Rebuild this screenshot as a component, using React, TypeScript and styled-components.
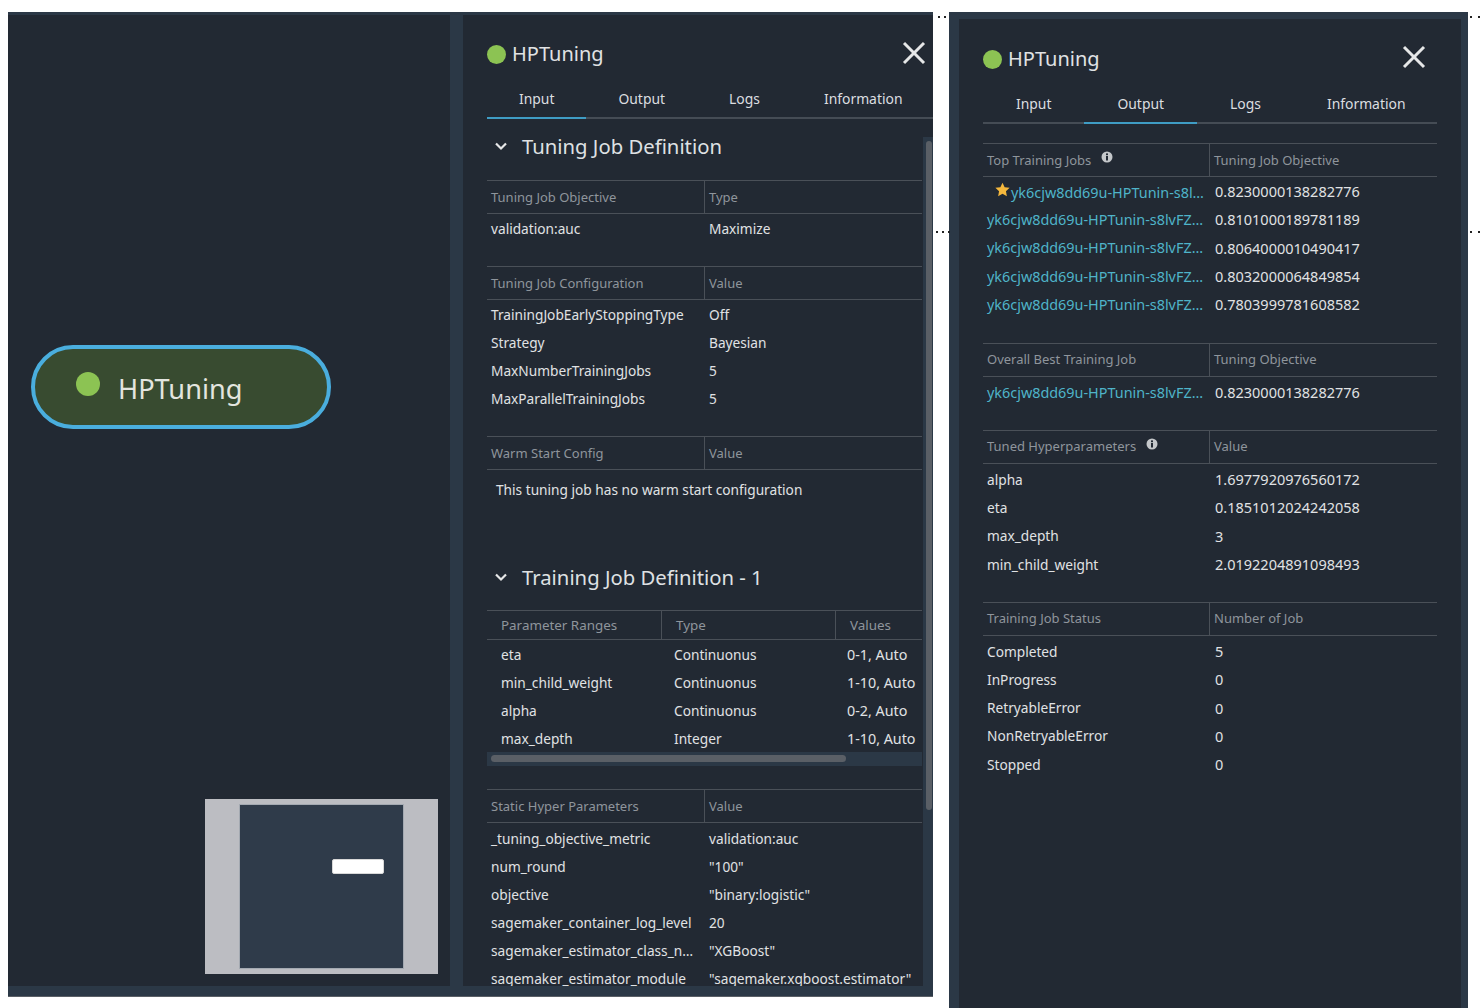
import React from 'react';
import styled, { createGlobalStyle } from 'styled-components';

const GlobalStyle = createGlobalStyle`
	html, body {
		margin: 0;
		background: #fff;
	}
	* {
		box-sizing: border-box;
	}
`;

const Page = styled.div`
	position: relative;
	width: 1482px;
	height: 1008px;
	overflow: hidden;
	display: flex;
	align-items: flex-start;
	padding: 12px 0 0 8px;
	font-family: 'Noto Sans', sans-serif;
	font-size: 13.7px;
	color: #e0e2e4;
`;

const LeftShot = styled.div`
	width: 925px;
	height: 985px;
	display: flex;
	flex-direction: column;
	background: #2b3846;
	padding: 3px 0 10px;
	border-bottom: 1px solid #5a5f66;
`;

const LeftBody = styled.div`
	flex: 1;
	min-height: 0;
	display: flex;
	gap: 13px;
`;

const Canvas = styled.div`
	position: relative;
	width: 442px;
	background: #222933;
`;

const FlowNode = styled.div`
	position: absolute;
	left: 23px;
	top: 330px;
	width: 300px;
	height: 84px;
	border: 4px solid #4aaede;
	border-radius: 42px;
	background: #384b30;
	display: flex;
	align-items: center;
	padding-left: 41px;
	gap: 18px;
	font-size: 27.2px;
	color: #e3e5df;
`;

const NodeDot = styled.span`
	width: 24px;
	height: 24px;
	margin-top: -6px;
	border-radius: 50%;
	background: #8cc353;
`;

const NodeLabel = styled.span`
	margin-top: 2px;
`;

const Minimap = styled.div`
	position: absolute;
	left: 197px;
	top: 784px;
	width: 233px;
	height: 175px;
	background: #bcbdc2;
	display: flex;
	justify-content: center;
	align-items: center;
`;

const MinimapView = styled.div`
	position: relative;
	width: 165px;
	height: 165px;
	margin-top: -1px;
	background: #2f3b4a;
	border: 1px solid #a3a9b1;
`;

const MinimapNode = styled.div`
	position: absolute;
	left: 92px;
	top: 54px;
	width: 52px;
	height: 15px;
	background: #fff;
	border: 1px solid #d8d8d8;
	border-radius: 2px;
`;

const Panel = styled.div<{ $pad: number }>`
	position: relative;
	flex: 1;
	min-width: 0;
	height: 100%;
	overflow: hidden;
	background: #222933;
	padding-left: ${(p) => p.$pad}px;
`;

const RightShot = styled.div`
	width: 519px;
	height: 996px;
	margin-left: 16px;
	background: #2b3846;
	padding: 7px 7px 0 10px;
	display: flex;
`;

const PanelHead = styled.div<{ $height: number }>`
	height: ${(p) => p.$height}px;
	padding-top: 14px;
	display: flex;
	align-items: center;
	justify-content: space-between;
`;

const PanelTitle = styled.div`
	display: flex;
	align-items: center;
	gap: 6px;
	font-size: 20px;
`;

const TitleText = styled.span`
	margin-top: -2px;
`;

const TitleDot = styled.span`
	width: 19px;
	height: 19px;
	border-radius: 50%;
	background: #8cc353;
`;

const CloseIcon = styled.svg<{ $right: number }>`
	width: 24px;
	height: 24px;
	margin-right: ${(p) => p.$right}px;
	margin-top: -4px;
	stroke: #e6e7e8;
	stroke-width: 3;
	fill: none;
`;

const TabBar = styled.div<{ $width?: number }>`
	display: flex;
	height: 39px;
	width: ${(p) => (p.$width ? `${p.$width}px` : 'auto')};
	border-bottom: 2px solid #454c55;
`;

const Tab = styled.div<{ $active?: boolean; $pad: number }>`
	padding: 0 ${(p) => p.$pad}px;
	height: 39px;
	line-height: 37px;
	font-size: 13.9px;
	color: #dcdee0;
	white-space: nowrap;
	border-bottom: 2px solid ${(p) => (p.$active ? '#3f9cc4' : 'transparent')};
`;

const SectionTitle = styled.div<{ $after: number }>`
	height: 56px;
	padding: 0 0 2px 7px;
	margin-bottom: ${(p) => p.$after}px;
	display: flex;
	align-items: center;
	gap: 14px;
	font-size: 20.3px;
	color: #dfe1e3;
`;

const TableWrap = styled.div<{ $gap?: number; $width: number }>`
	width: ${(p) => p.$width}px;
	margin-top: ${(p) => p.$gap ?? 0}px;
`;

const Head = styled.div<{ $cols: string; $height?: number }>`
	display: grid;
	grid-template-columns: ${(p) => p.$cols};
	height: ${(p) => p.$height ?? 34}px;
	border-top: 1px solid #4a5058;
	border-bottom: 1px solid #4a5058;
`;

const HeadCell = styled.div<{ $pad?: number; $size?: number }>`
	display: flex;
	align-items: center;
	gap: 10px;
	padding: 0 0 1px ${(p) => p.$pad ?? 4}px;
	font-size: ${(p) => p.$size ?? 13}px;
	color: #8f959c;
	white-space: nowrap;
	& + & {
		border-left: 1px solid #4a5058;
	}
`;

const Rows = styled.div<{ $pad?: number }>`
	padding-top: ${(p) => p.$pad ?? 0}px;
`;

const Row = styled.div<{ $cols: string; $height?: number }>`
	display: grid;
	grid-template-columns: ${(p) => p.$cols};
	height: ${(p) => p.$height ?? 28}px;
	align-items: center;
`;

const Cell = styled.div<{ $pad?: number }>`
	padding-left: ${(p) => p.$pad ?? 4}px;
	white-space: nowrap;
`;

const ValueCell = styled(Cell)`
	padding-left: ${(p) => p.$pad ?? 5}px;
`;

const RangeCell = styled(ValueCell)`
	font-size: 14.3px;
`;

const NumCell = styled(ValueCell)`
	padding-left: 6px;
	font-size: 14.5px;
`;

const LinkCell = styled(Cell)`
	color: #4fb4c9;
	font-size: 14.4px;
`;

const StarCell = styled(LinkCell)`
	display: flex;
	align-items: center;
	gap: 1px;
	padding-left: 12px;
`;

const LinkText = styled.span`
	padding-top: 3px;
`;

const Note = styled.div`
	height: 80px;
	padding: 9px 0 0 9px;
	line-height: 22px;
`;

const HScroll = styled.div`
	height: 14px;
	padding: 3px 4px;
	background: #2b3846;
`;

const HThumb = styled.div`
	width: 355px;
	height: 7px;
	border-radius: 4px;
	background: #5a5f66;
`;

const VScroll = styled.div`
	position: absolute;
	right: 0;
	top: 122px;
	bottom: 0;
	width: 10px;
	background: #2b3846;
	padding: 4px 1px 0 3px;
`;

const VThumb = styled.div`
	height: 669px;
	border-radius: 3px;
	background: #5a5f66;
`;

const Dots = styled.div<{ $x: number; $y: number; $gap: number }>`
	position: absolute;
	left: ${(p) => p.$x}px;
	top: ${(p) => p.$y}px;
	display: flex;
	gap: ${(p) => p.$gap}px;
`;

const Dot = styled.span`
	width: 2px;
	height: 2px;
	background: #222;
`;

const TWO_LEFT = '217px 1fr';
const THREE_LEFT = '174px 174px 1fr';
const TWO_RIGHT = '226px 1fr';

const close = (
	<>
		<line x1="2" y1="2" x2="22" y2="22" />
		<line x1="22" y1="2" x2="2" y2="22" />
	</>
);

const Chevron = () => (
	<svg width="14" height="14" viewBox="0 0 14 14" fill="none" stroke="#e6e7e8" strokeWidth="2.2">
		<polyline points="2,4.5 7,9.5 12,4.5" />
	</svg>
);

const InfoIcon = () => (
	<svg width="12" height="12" viewBox="0 0 12 12" style={{ marginTop: -5 }}>
		<circle cx="6" cy="6" r="5.5" fill="#c4c7ca" />
		<rect x="5" y="5" width="2" height="4.5" fill="#222933" />
		<rect x="5" y="2.4" width="2" height="1.8" fill="#222933" />
	</svg>
);

const Star = () => (
	<svg width="15" height="15" viewBox="0 0 24 24" style={{ flexShrink: 0, marginTop: -4 }}>
		<polygon fill="#f5b83d" points="12,1 15.4,8.3 23.4,9.3 17.5,14.8 19,22.7 12,18.8 5,22.7 6.5,14.8 .6,9.3 8.6,8.3" />
	</svg>
);

function KeyTable({
	head,
	rows,
	gap,
	width,
	cols,
	pad,
	rowHeight,
	numeric,
}: {
	head: [React.ReactNode, string];
	rows: string[][];
	gap?: number;
	width: number;
	cols: string;
	pad?: number;
	rowHeight?: number;
	numeric?: boolean;
}) {
	const Value = numeric ? NumCell : ValueCell;
	return (
		<TableWrap $gap={gap} $width={width}>
			<Head $cols={cols}>
				<HeadCell>{head[0]}</HeadCell>
				<HeadCell>{head[1]}</HeadCell>
			</Head>
			<Rows $pad={pad}>
				{rows.map((r) => (
					<Row key={r[0]} $cols={cols} $height={rowHeight}>
						<Cell>{r[0]}</Cell>
						<Value>{r[1]}</Value>
					</Row>
				))}
			</Rows>
		</TableWrap>
	);
}

const JOB = 'yk6cjw8dd69u-HPTunin-s8lvFZ…';
const BEST_JOB = 'yk6cjw8dd69u-HPTunin-s8l…';

function App() {
	return (
		<Page>
			<GlobalStyle />
			<LeftShot>
				<LeftBody>
					<Canvas>
						<FlowNode>
							<NodeDot />
							<NodeLabel>HPTuning</NodeLabel>
						</FlowNode>
						<Minimap>
							<MinimapView>
								<MinimapNode />
							</MinimapView>
						</Minimap>
					</Canvas>
					<Panel $pad={24}>
						<PanelHead $height={65}>
							<PanelTitle>
								<TitleDot />
								<TitleText>HPTuning</TitleText>
							</PanelTitle>
							<CloseIcon $right={7} viewBox="0 0 24 24">
								{close}
							</CloseIcon>
						</PanelHead>
						<TabBar>
							<Tab $pad={32} $active>
								Input
							</Tab>
							<Tab $pad={32}>Output</Tab>
							<Tab $pad={32}>Logs</Tab>
							<Tab $pad={32}>Information</Tab>
						</TabBar>
						<SectionTitle $after={5}>
							<Chevron />
							Tuning Job Definition
						</SectionTitle>
						<KeyTable
							width={435}
							cols={TWO_LEFT}
							head={['Tuning Job Objective', 'Type']}
							rows={[['validation:auc', 'Maximize']]}
						/>
						<KeyTable
							gap={24}
							width={435}
							cols={TWO_LEFT}
							head={['Tuning Job Configuration', 'Value']}
							rows={[
								['TrainingJobEarlyStoppingType', 'Off'],
								['Strategy', 'Bayesian'],
								['MaxNumberTrainingJobs', '5'],
								['MaxParallelTrainingJobs', '5'],
							]}
						/>
						<TableWrap $gap={24} $width={435}>
							<Head $cols={TWO_LEFT}>
								<HeadCell>Warm Start Config</HeadCell>
								<HeadCell>Value</HeadCell>
							</Head>
							<Note>This tuning job has no warm start configuration</Note>
						</TableWrap>
						<SectionTitle $after={4}>
							<Chevron />
							Training Job Definition - 1
						</SectionTitle>
						<TableWrap $width={435}>
							<Head $cols={THREE_LEFT} $height={30}>
								<HeadCell $pad={14} $size={13.4}>
									Parameter Ranges
								</HeadCell>
								<HeadCell $pad={14} $size={13.4}>
									Type
								</HeadCell>
								<HeadCell $pad={14} $size={13.4}>
									Values
								</HeadCell>
							</Head>
							<Rows>
								{[
									['eta', 'Continuonus', '0-1, Auto'],
									['min_child_weight', 'Continuonus', '1-10, Auto'],
									['alpha', 'Continuonus', '0-2, Auto'],
									['max_depth', 'Integer', '1-10, Auto'],
								].map((r) => (
									<Row key={r[0]} $cols={THREE_LEFT}>
										<Cell $pad={14}>{r[0]}</Cell>
										<Cell $pad={13}>{r[1]}</Cell>
										<RangeCell $pad={12}>{r[2]}</RangeCell>
									</Row>
								))}
							</Rows>
							<HScroll>
								<HThumb />
							</HScroll>
						</TableWrap>
						<KeyTable
							gap={23}
							pad={1}
							width={435}
							cols={TWO_LEFT}
							head={['Static Hyper Parameters', 'Value']}
							rows={[
								['_tuning_objective_metric', 'validation:auc'],
								['num_round', '"100"'],
								['objective', '"binary:logistic"'],
								['sagemaker_container_log_level', '20'],
								['sagemaker_estimator_class_n…', '"XGBoost"'],
								['sagemaker_estimator_module', '"sagemaker.xgboost.estimator"'],
							]}
						/>
						<VScroll>
							<VThumb />
						</VScroll>
					</Panel>
				</LeftBody>
			</LeftShot>
			<RightShot>
				<Panel $pad={24}>
					<PanelHead $height={66}>
						<PanelTitle>
							<TitleDot />
							<TitleText>HPTuning</TitleText>
						</PanelTitle>
						<CloseIcon $right={35} viewBox="0 0 24 24">
							{close}
						</CloseIcon>
					</PanelHead>
					<TabBar $width={454}>
						<Tab $pad={33}>Input</Tab>
						<Tab $pad={33} $active>
							Output
						</Tab>
						<Tab $pad={33}>Logs</Tab>
						<Tab $pad={33}>Information</Tab>
					</TabBar>
					<TableWrap $gap={19} $width={454}>
						<Head $cols={TWO_RIGHT}>
							<HeadCell>
								Top Training Jobs <InfoIcon />
							</HeadCell>
							<HeadCell>Tuning Job Objective</HeadCell>
						</Head>
						<Rows>
							<Row $cols={TWO_RIGHT} $height={28.3}>
								<StarCell>
									<Star />
									<LinkText>{BEST_JOB}</LinkText>
								</StarCell>
								<NumCell>0.8230000138282776</NumCell>
							</Row>
							{['0.8101000189781189', '0.8064000010490417', '0.8032000064849854', '0.7803999781608582'].map((v) => (
								<Row key={v} $cols={TWO_RIGHT} $height={28.3}>
									<LinkCell>{JOB}</LinkCell>
									<NumCell>{v}</NumCell>
								</Row>
							))}
						</Rows>
					</TableWrap>
					<TableWrap $gap={24.5} $width={454}>
						<Head $cols={TWO_RIGHT}>
							<HeadCell>Overall Best Training Job</HeadCell>
							<HeadCell>Tuning Objective</HeadCell>
						</Head>
						<Rows $pad={1}>
							<Row $cols={TWO_RIGHT} $height={28.3}>
								<LinkCell>{JOB}</LinkCell>
								<NumCell>0.8230000138282776</NumCell>
							</Row>
						</Rows>
					</TableWrap>
					<KeyTable
						gap={23.7}
						pad={1}
						rowHeight={28.3}
						numeric
						width={454}
						cols={TWO_RIGHT}
						head={[
							<>
								Tuned Hyperparameters <InfoIcon />
							</>,
							'Value',
						]}
						rows={[
							['alpha', '1.6977920976560172'],
							['eta', '0.1851012024242058'],
							['max_depth', '3'],
							['min_child_weight', '2.0192204891098493'],
						]}
					/>
					<KeyTable
						gap={23.8}
						pad={1}
						rowHeight={28.3}
						numeric
						width={454}
						cols={TWO_RIGHT}
						head={['Training Job Status', 'Number of Job']}
						rows={[
							['Completed', '5'],
							['InProgress', '0'],
							['RetryableError', '0'],
							['NonRetryableError', '0'],
							['Stopped', '0'],
						]}
					/>
				</Panel>
			</RightShot>
			<Dots $x={938} $y={16} $gap={4}>
				<Dot />
				<Dot />
			</Dots>
			<Dots $x={936} $y={231} $gap={4}>
				<Dot />
				<Dot />
				<Dot />
			</Dots>
			<Dots $x={1470} $y={16} $gap={6}>
				<Dot />
				<Dot />
			</Dots>
			<Dots $x={1470} $y={231} $gap={6}>
				<Dot />
				<Dot />
			</Dots>
		</Page>
	);
}

export default App;
